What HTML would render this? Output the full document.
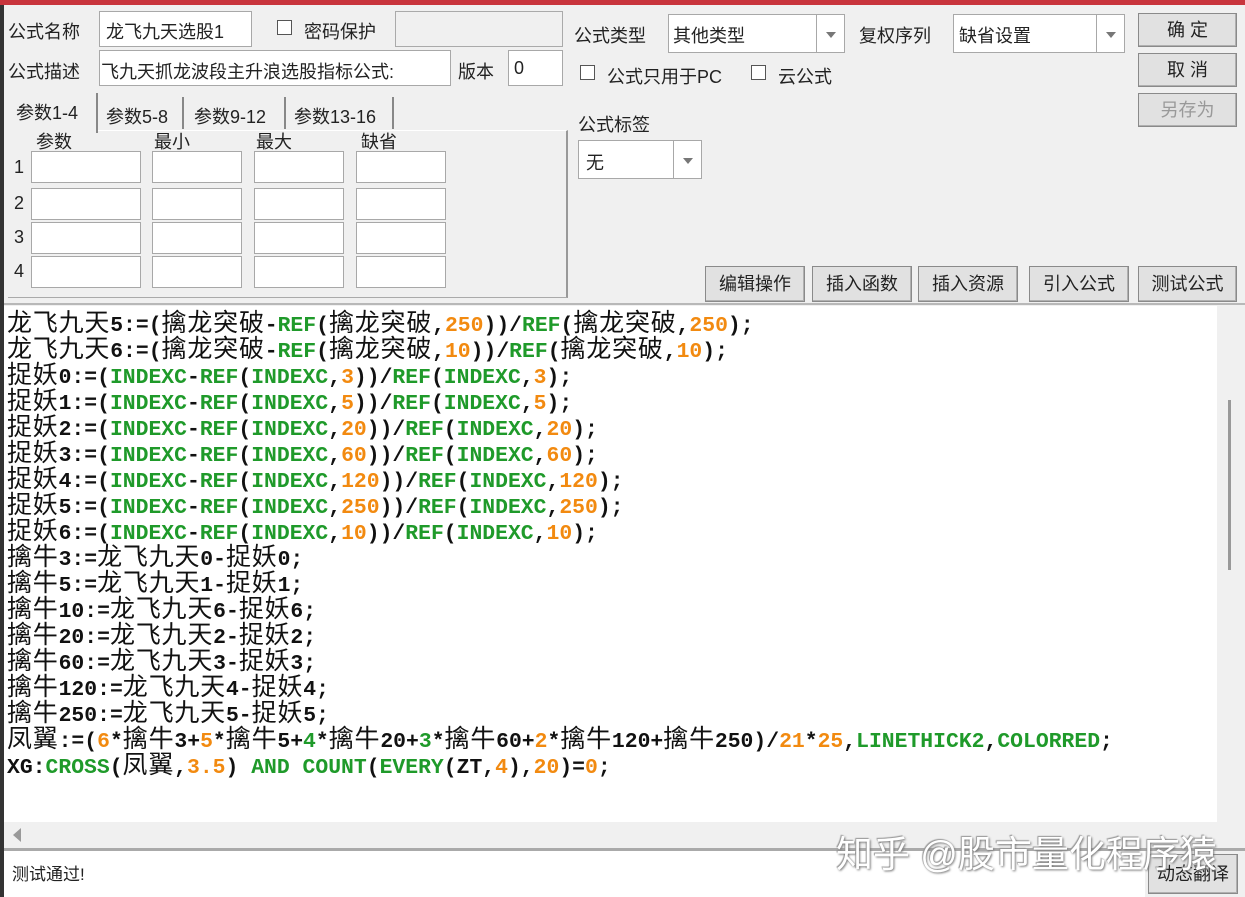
<!DOCTYPE html>
<html><head><meta charset="utf-8"><style>
*{box-sizing:border-box;margin:0;padding:0}
body{width:1245px;height:897px;overflow:hidden;background:#f0f0f0;font-family:"Liberation Sans","Noto Sans CJK SC",sans-serif;font-size:18px;color:#222;position:relative}
.a{position:absolute;white-space:nowrap}
.in{position:absolute;background:#fff;border:1px solid #a8a8a8}
.btn{position:absolute;background:#e1e1e1;border:1px solid #8a8a8a;text-align:center;font-size:18px;box-shadow:inset -1px -1px 0 #b0b0b0}
.cb{position:absolute;width:15px;height:15px;background:#fff;border:1px solid #555}
.dd{position:absolute;background:#fff;border:1px solid #a8a8a8}
.dd .ar{position:absolute;right:0;top:0;bottom:0;width:28px;border-left:1px solid #a8a8a8}
.dd .ar:after{content:"";position:absolute;left:9px;top:50%;margin-top:-2px;border:5px solid transparent;border-top:6px solid #777}
#code{position:absolute;left:4px;top:306px;width:1213px;height:516px;background:#fff}
.ln{position:absolute;left:3px;height:26px;line-height:26px;white-space:pre;font-family:"Liberation Mono",monospace;font-weight:bold;font-size:21.4px;color:#111}
.ln c{font-family:"Noto Sans CJK SC",sans-serif;font-weight:normal;font-size:25px;display:inline-block;width:25.8px;text-align:left;overflow:visible}
g{color:#1f9a2a}
o{color:#f28a10}
</style></head><body>
<div class="a" style="left:0;top:0;width:1245px;height:5px;background:#c8343c"></div>
<div class="a" style="left:0;top:5px;width:4px;height:892px;background:#333"></div>

<div class="a" style="left:8px;top:18px">公式名称</div>
<div class="in" style="left:99px;top:11px;width:153px;height:36px"></div>
<div class="a" style="left:106px;top:18px">龙飞九天选股1</div>
<div class="cb" style="left:277px;top:20px"></div>
<div class="a" style="left:304px;top:18px">密码保护</div>
<div class="a" style="left:395px;top:11px;width:168px;height:36px;border:1px solid #aaa;background:#f0f0f0"></div>

<div class="a" style="left:8px;top:58px">公式描述</div>
<div class="in" style="left:99px;top:50px;width:352px;height:36px"></div>
<div class="a" style="left:101px;top:58px;width:348px;overflow:hidden">飞九天抓龙波段主升浪选股指标公式:</div>
<div class="a" style="left:458px;top:58px">版本</div>
<div class="in" style="left:508px;top:50px;width:55px;height:36px"></div>
<div class="a" style="left:514px;top:58px">0</div>

<div class="a" style="left:574px;top:22px">公式类型</div>
<div class="dd" style="left:668px;top:14px;width:177px;height:39px"><div class="ar"></div></div>
<div class="a" style="left:673px;top:22px">其他类型</div>
<div class="a" style="left:859px;top:22px">复权序列</div>
<div class="dd" style="left:953px;top:14px;width:172px;height:39px"><div class="ar"></div></div>
<div class="a" style="left:959px;top:22px">缺省设置</div>
<div class="cb" style="left:580px;top:65px"></div>
<div class="a" style="left:607px;top:63px">公式只用于PC</div>
<div class="cb" style="left:751px;top:65px"></div>
<div class="a" style="left:778px;top:63px">云公式</div>
<div class="a" style="left:578px;top:111px">公式标签</div>
<div class="dd" style="left:578px;top:140px;width:124px;height:39px"><div class="ar"></div></div>
<div class="a" style="left:586px;top:149px">无</div>

<div class="btn" style="left:1138px;top:13px;width:99px;height:34px;line-height:32px">确 定</div>
<div class="btn" style="left:1138px;top:53px;width:99px;height:34px;line-height:32px">取 消</div>
<div class="btn" style="left:1138px;top:93px;width:99px;height:34px;line-height:32px;color:#999">另存为</div>

<div class="btn" style="left:705px;top:266px;width:100px;height:36px;line-height:34px">编辑操作</div>
<div class="btn" style="left:812px;top:266px;width:100px;height:36px;line-height:34px">插入函数</div>
<div class="btn" style="left:918px;top:266px;width:100px;height:36px;line-height:34px">插入资源</div>
<div class="btn" style="left:1029px;top:266px;width:100px;height:36px;line-height:34px">引入公式</div>
<div class="btn" style="left:1138px;top:266px;width:99px;height:36px;line-height:34px">测试公式</div>

<div class="a" style="left:8px;top:130px;width:560px;height:168px;border-right:2px solid #999;border-bottom:1px solid #aaa;border-top:1px solid #fff"></div>
<div class="a" style="left:8px;top:93px;width:90px;height:40px;border-right:2px solid #888;background:#f0f0f0;font-size:18px;padding:6px 0 0 8px">参数1-4</div>
<div class="a" style="left:100px;top:97px;width:84px;font-size:18px;padding:6px 0 0 6px;border-right:2px solid #888;height:32px">参数5-8</div>
<div class="a" style="left:186px;top:97px;font-size:18px;padding:6px 0 0 8px;border-right:2px solid #888;height:32px;width:100px">参数9-12</div>
<div class="a" style="left:288px;top:97px;font-size:18px;padding:6px 0 0 6px;border-right:2px solid #888;height:32px;width:106px">参数13-16</div>
<div class="a" style="left:36px;top:128px">参数</div>
<div class="a" style="left:154px;top:128px">最小</div>
<div class="a" style="left:256px;top:128px">最大</div>
<div class="a" style="left:361px;top:128px">缺省</div>
<div class="a" style="left:14px;top:157px">1</div><div class="a" style="left:14px;top:193px">2</div><div class="a" style="left:14px;top:227px">3</div><div class="a" style="left:14px;top:261px">4</div>
<div class="in" style="left:31px;top:151px;width:110px;height:32px"></div><div class="in" style="left:152px;top:151px;width:90px;height:32px"></div><div class="in" style="left:254px;top:151px;width:90px;height:32px"></div><div class="in" style="left:356px;top:151px;width:90px;height:32px"></div>
<div class="in" style="left:31px;top:188px;width:110px;height:32px"></div><div class="in" style="left:152px;top:188px;width:90px;height:32px"></div><div class="in" style="left:254px;top:188px;width:90px;height:32px"></div><div class="in" style="left:356px;top:188px;width:90px;height:32px"></div>
<div class="in" style="left:31px;top:222px;width:110px;height:32px"></div><div class="in" style="left:152px;top:222px;width:90px;height:32px"></div><div class="in" style="left:254px;top:222px;width:90px;height:32px"></div><div class="in" style="left:356px;top:222px;width:90px;height:32px"></div>
<div class="in" style="left:31px;top:256px;width:110px;height:32px"></div><div class="in" style="left:152px;top:256px;width:90px;height:32px"></div><div class="in" style="left:254px;top:256px;width:90px;height:32px"></div><div class="in" style="left:356px;top:256px;width:90px;height:32px"></div>

<div class="a" style="left:4px;top:303px;width:1241px;height:2px;background:#b8b8b8"></div>
<div id="code">
<div class="ln" style="top:2px"><c>龙</c><c>飞</c><c>九</c><c>天</c>5:=(<c>擒</c><c>龙</c><c>突</c><c>破</c>-<g>REF</g>(<c>擒</c><c>龙</c><c>突</c><c>破</c>,<o>250</o>))/<g>REF</g>(<c>擒</c><c>龙</c><c>突</c><c>破</c>,<o>250</o>);</div>
<div class="ln" style="top:28px"><c>龙</c><c>飞</c><c>九</c><c>天</c>6:=(<c>擒</c><c>龙</c><c>突</c><c>破</c>-<g>REF</g>(<c>擒</c><c>龙</c><c>突</c><c>破</c>,<o>10</o>))/<g>REF</g>(<c>擒</c><c>龙</c><c>突</c><c>破</c>,<o>10</o>);</div>
<div class="ln" style="top:54px"><c>捉</c><c>妖</c>0:=(<g>INDEXC</g>-<g>REF</g>(<g>INDEXC</g>,<o>3</o>))/<g>REF</g>(<g>INDEXC</g>,<o>3</o>);</div>
<div class="ln" style="top:80px"><c>捉</c><c>妖</c>1:=(<g>INDEXC</g>-<g>REF</g>(<g>INDEXC</g>,<o>5</o>))/<g>REF</g>(<g>INDEXC</g>,<o>5</o>);</div>
<div class="ln" style="top:106px"><c>捉</c><c>妖</c>2:=(<g>INDEXC</g>-<g>REF</g>(<g>INDEXC</g>,<o>20</o>))/<g>REF</g>(<g>INDEXC</g>,<o>20</o>);</div>
<div class="ln" style="top:132px"><c>捉</c><c>妖</c>3:=(<g>INDEXC</g>-<g>REF</g>(<g>INDEXC</g>,<o>60</o>))/<g>REF</g>(<g>INDEXC</g>,<o>60</o>);</div>
<div class="ln" style="top:158px"><c>捉</c><c>妖</c>4:=(<g>INDEXC</g>-<g>REF</g>(<g>INDEXC</g>,<o>120</o>))/<g>REF</g>(<g>INDEXC</g>,<o>120</o>);</div>
<div class="ln" style="top:184px"><c>捉</c><c>妖</c>5:=(<g>INDEXC</g>-<g>REF</g>(<g>INDEXC</g>,<o>250</o>))/<g>REF</g>(<g>INDEXC</g>,<o>250</o>);</div>
<div class="ln" style="top:210px"><c>捉</c><c>妖</c>6:=(<g>INDEXC</g>-<g>REF</g>(<g>INDEXC</g>,<o>10</o>))/<g>REF</g>(<g>INDEXC</g>,<o>10</o>);</div>
<div class="ln" style="top:236px"><c>擒</c><c>牛</c>3:=<c>龙</c><c>飞</c><c>九</c><c>天</c>0-<c>捉</c><c>妖</c>0;</div>
<div class="ln" style="top:262px"><c>擒</c><c>牛</c>5:=<c>龙</c><c>飞</c><c>九</c><c>天</c>1-<c>捉</c><c>妖</c>1;</div>
<div class="ln" style="top:288px"><c>擒</c><c>牛</c>10:=<c>龙</c><c>飞</c><c>九</c><c>天</c>6-<c>捉</c><c>妖</c>6;</div>
<div class="ln" style="top:314px"><c>擒</c><c>牛</c>20:=<c>龙</c><c>飞</c><c>九</c><c>天</c>2-<c>捉</c><c>妖</c>2;</div>
<div class="ln" style="top:340px"><c>擒</c><c>牛</c>60:=<c>龙</c><c>飞</c><c>九</c><c>天</c>3-<c>捉</c><c>妖</c>3;</div>
<div class="ln" style="top:366px"><c>擒</c><c>牛</c>120:=<c>龙</c><c>飞</c><c>九</c><c>天</c>4-<c>捉</c><c>妖</c>4;</div>
<div class="ln" style="top:392px"><c>擒</c><c>牛</c>250:=<c>龙</c><c>飞</c><c>九</c><c>天</c>5-<c>捉</c><c>妖</c>5;</div>
<div class="ln" style="top:418px"><c>凤</c><c>翼</c>:=(<o>6</o>*<c>擒</c><c>牛</c>3+<o>5</o>*<c>擒</c><c>牛</c>5+<g>4</g>*<c>擒</c><c>牛</c>20+<g>3</g>*<c>擒</c><c>牛</c>60+<o>2</o>*<c>擒</c><c>牛</c>120+<c>擒</c><c>牛</c>250)/<o>21</o>*<o>25</o>,<g>LINETHICK2</g>,<g>COLORRED</g>;</div>
<div class="ln" style="top:444px">XG:<g>CROSS</g>(<c>凤</c><c>翼</c>,<o>3.5</o>) <g>AND</g> <g>COUNT</g>(<g>EVERY</g>(ZT,<o>4</o>),<o>20</o>)=<o>0</o>;</div>
</div>
<div class="a" style="left:1217px;top:306px;width:24px;height:516px;background:#f0f0f0"></div>
<div class="a" style="left:1228px;top:400px;width:3px;height:170px;background:#999"></div>
<div class="a" style="left:4px;top:822px;width:1213px;height:26px;background:#f0f0f0"></div>
<div class="a" style="left:13px;top:828px;border:7px solid transparent;border-right:8px solid #999;border-left:0"></div>
<div class="a" style="left:4px;top:848px;width:1241px;height:3px;background:#aaa"></div>
<div class="a" style="left:4px;top:851px;width:1141px;height:46px;background:#fff"></div>
<div class="a" style="left:12px;top:860px;font-size:17px">测试通过!</div>
<div class="btn" style="left:1148px;top:854px;width:90px;height:40px;line-height:38px;font-size:18px">动态翻译</div>
<div class="a" style="left:836px;top:824px;font-size:37px;color:#fff;text-shadow:1px 1px 2px #777,-1px -1px 1px #999">知乎 @股市量化程序猿</div>
</body></html>
